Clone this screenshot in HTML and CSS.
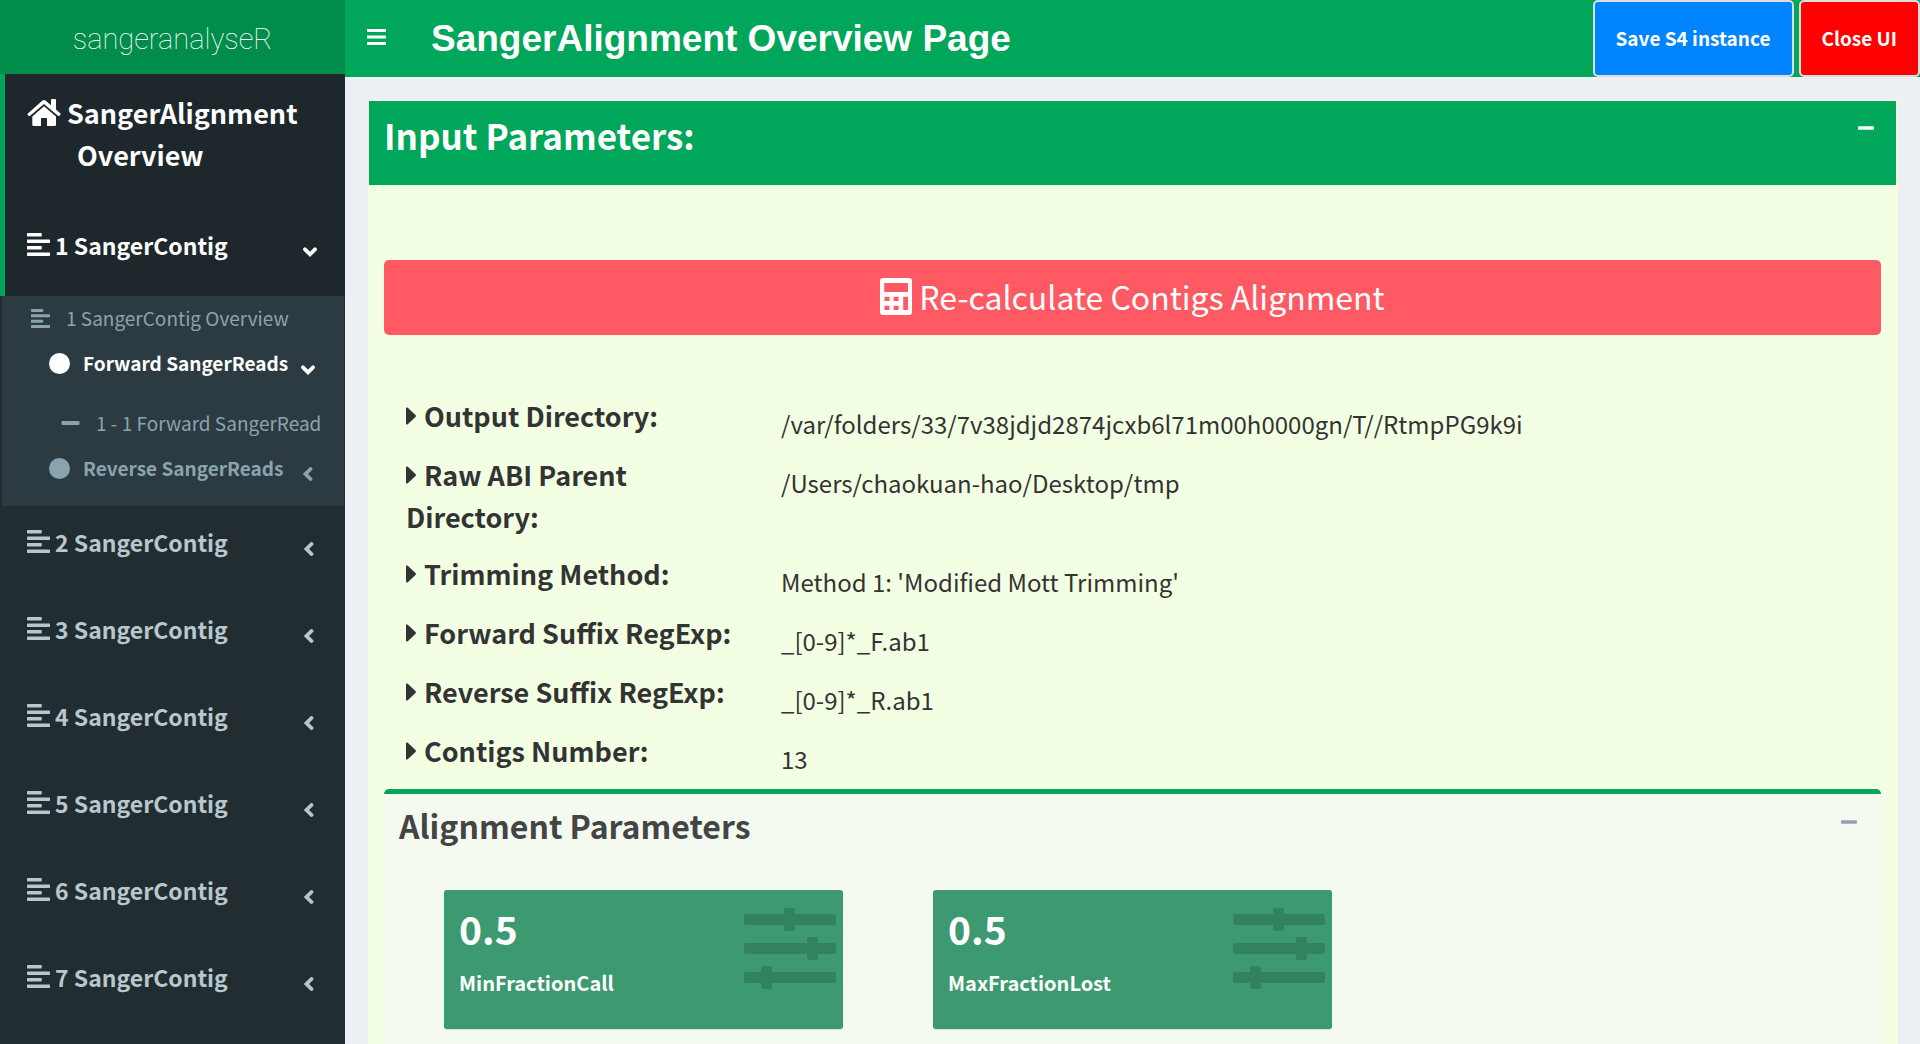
FILE: index.html
```html
<!DOCTYPE html>
<html lang="en">
<head>
<meta charset="utf-8">
<title>SangerAlignment Overview Page</title>
<link rel="stylesheet" href="styles.css">
</head>
<body>
<svg class="sprite" aria-hidden="true">
  <symbol id="align" viewBox="0 0 448 448"><path d="M12 0h264q12 0 12 13v42q0 13-12 13H12Q0 68 0 55V13Q0 0 12 0zM12 126h424q12 0 12 13v42q0 13-12 13H12q-12 0-12-13v-42q0-13 12-13zM12 254h264q12 0 12 13v42q0 13-12 13H12q-12 0-12-13v-42q0-13 12-13zM12 380h424q12 0 12 13v42q0 13-12 13H12q-12 0-12-13v-42q0-13 12-13z"/></symbol>
  <symbol id="chev-down" viewBox="0 0 14 10"><path d="M2 2.300l5 5 5-5" fill="none" stroke="currentColor" stroke-width="3.800" stroke-linecap="round"/></symbol>
  <symbol id="chev-left" viewBox="0 0 10 14"><path d="M7.500 2l-5 5 5 5" fill="none" stroke="currentColor" stroke-width="3.800" stroke-linecap="round"/></symbol>
  <symbol id="caret" viewBox="0 0 10 18"><path d="M0 1.500Q0 0 1.500 .6L9.500 8q.8 1 0 2L1.500 17.400Q0 18 0 16.500z"/></symbol>
  <symbol id="minus" viewBox="0 0 18 4"><rect width="18" height="4" rx="1"/></symbol>
  <symbol id="circle" viewBox="0 0 20 20"><circle cx="10" cy="10" r="10"/></symbol>
  <symbol id="sliders" viewBox="0 0 92 81"><path d="M2 6h38V2q0-2 2-2h7q2 0 2 2v4h39q2 0 2 2v7q0 2-2 2H51v4q0 2-2 2h-7q-2 0-2-2v-4H2q-2 0-2-2V8q0-2 2-2zM2 35h61v-4q0-2 2-2h7q2 0 2 2v4h16q2 0 2 2v7q0 2-2 2H74v4q0 2-2 2h-7q-2 0-2-2v-4H2q-2 0-2-2v-7q0-2 2-2zM2 64h15v-4q0-2 2-2h7q2 0 2 2v4h62q2 0 2 2v7q0 2-2 2H28v4q0 2-2 2h-7q-2 0-2-2v-4H2q-2 0-2-2v-7q0-2 2-2z"/></symbol>
</svg>
<div class="app">
  <aside class="sidebar">
    <a class="logo" href="#">sangeranalyseR</a>
    <nav>
      <a class="item home" href="#">
        <svg class="i-home" viewBox="0 0 34 27"><path d="M1.200 14.200L15.500 1.500q1.500-1.200 3 0L24 6.200V1.200Q24 0 25 0h3q1 0 1 1v9.500l4.200 3.700q.8.8.2 1.500l-1 1.100q-.7.6-1.500 0L17 5 3.100 16.800q-.8.6-1.500 0l-1-1.100q-.6-.7.6-1.500z"/><path d="M17 7.300l12 10.200v8.300q0 1.200-1.200 1.200H20v-8h-6v8H6.500q-1.200 0-1.200-1.200v-8.300z"/></svg>
        <span>SangerAlignment</span><span class="second">Overview</span></a>
      <a class="item active" href="#"><svg class="i-align"><use href="#align"/></svg><span>1 SangerContig</span><svg class="i-down"><use href="#chev-down"/></svg></a>
      <div class="submenu">
        <a class="sub" href="#"><svg class="i-small"><use href="#align"/></svg>1 SangerContig Overview</a>
        <a class="sub read open" href="#"><svg class="i-dot"><use href="#circle"/></svg>Forward SangerReads<svg class="i-down"><use href="#chev-down"/></svg></a>
        <a class="sub leaf" href="#"><svg class="i-minus"><use href="#minus"/></svg>1 - 1 Forward SangerRead</a>
        <a class="sub read" href="#"><svg class="i-dot"><use href="#circle"/></svg>Reverse SangerReads<svg class="i-left"><use href="#chev-left"/></svg></a>
      </div>
      <a class="item" href="#"><svg class="i-align"><use href="#align"/></svg><span>2 SangerContig</span><svg class="i-left"><use href="#chev-left"/></svg></a>
      <a class="item" href="#"><svg class="i-align"><use href="#align"/></svg><span>3 SangerContig</span><svg class="i-left"><use href="#chev-left"/></svg></a>
      <a class="item" href="#"><svg class="i-align"><use href="#align"/></svg><span>4 SangerContig</span><svg class="i-left"><use href="#chev-left"/></svg></a>
      <a class="item" href="#"><svg class="i-align"><use href="#align"/></svg><span>5 SangerContig</span><svg class="i-left"><use href="#chev-left"/></svg></a>
      <a class="item" href="#"><svg class="i-align"><use href="#align"/></svg><span>6 SangerContig</span><svg class="i-left"><use href="#chev-left"/></svg></a>
      <a class="item" href="#"><svg class="i-align"><use href="#align"/></svg><span>7 SangerContig</span><svg class="i-left"><use href="#chev-left"/></svg></a>
    </nav>
  </aside>
  <div class="page">
    <header class="topbar">
      <button class="toggle" aria-label="Toggle navigation"><svg viewBox="0 0 19 16"><path d="M0 0h19v3H0zM0 6.500h19v3H0zM0 13h19v3H0z"/></svg></button>
      <h1>SangerAlignment Overview Page</h1>
      <button class="action save">Save S4 instance</button>
      <button class="action close">Close UI</button>
    </header>
    <main>
      <section class="box">
        <div class="box-head"><h2>Input Parameters:</h2><button class="collapse" aria-label="Collapse"><svg><use href="#minus"/></svg></button></div>
        <div class="box-body">
          <button class="recalc"><svg viewBox="0 0 32 37"><path fill-rule="evenodd" d="M3 0h26q3 0 3 3v31q0 3-3 3H3q-3 0-3-3V3Q0 0 3 0zM5 5q-.8 0-.8.8v7.400q0 .8.8.8h22.200q.8 0 .8-.8V5.800q0-.8-.8-.8zM4.500 18.700V23h5v-4.300zM13.600 18.700V23h5v-4.300zM23.200 18.700V32H28V18.700zM4.500 27.800V32h5v-4.200zM13.600 27.800V32h5v-4.200z"/></svg>Re-calculate Contigs Alignment</button>
          <dl>
            <dt><svg><use href="#caret"/></svg>Output Directory:</dt><dd>/var/folders/33/7v38jdjd2874jcxb6l71m00h0000gn/T//RtmpPG9k9i</dd>
            <dt><svg><use href="#caret"/></svg>Raw ABI Parent Directory:</dt><dd>/Users/chaokuan-hao/Desktop/tmp</dd>
            <dt><svg><use href="#caret"/></svg>Trimming Method:</dt><dd>Method 1: 'Modified Mott Trimming'</dd>
            <dt><svg><use href="#caret"/></svg>Forward Suffix RegExp:</dt><dd>_[0-9]*_F.ab1</dd>
            <dt><svg><use href="#caret"/></svg>Reverse Suffix RegExp:</dt><dd>_[0-9]*_R.ab1</dd>
            <dt><svg><use href="#caret"/></svg>Contigs Number:</dt><dd>13</dd>
          </dl>
          <section class="panel">
            <div class="panel-head"><h3>Alignment Parameters</h3><button class="collapse" aria-label="Collapse"><svg><use href="#minus"/></svg></button></div>
            <div class="cards">
              <div class="card"><div><strong>0.5</strong><p>MinFractionCall</p></div><svg><use href="#sliders"/></svg></div>
              <div class="card"><div><strong>0.5</strong><p>MaxFractionLost</p></div><svg><use href="#sliders"/></svg></div>
            </div>
          </section>
        </div>
      </section>
    </main>
  </div>
</div>
</body>
</html>
```
FILE: styles.css
```css
* { box-sizing: border-box; }
body {
  margin: 0;
  background: #ecf0f5;
  color: #333;
  font-family: "Noto Sans CJK SC", "Noto Sans", sans-serif;
  overflow: hidden;
}
h1, h2, h3, p, dl, dd { margin: 0; }
a { color: inherit; text-decoration: none; }
button { font: inherit; color: inherit; border: 0; background: none; padding: 0; cursor: pointer; }
svg { fill: currentColor; flex: none; }
.sprite { display: none; }

.app { display: flex; height: 100vh; }
.page { flex: 1; min-width: 0; }

/* Sidebar */
.sidebar { width: 345px; flex: none; background: #222d32; color: #b8c7ce; overflow: hidden; }
.logo {
  display: block;
  height: 74px;
  background: #008d4c;
  color: #fff;
  font: 100 29px/78px Roboto, "Liberation Sans", sans-serif;
  text-align: center;
}
.item {
  display: flex;
  align-items: flex-start;
  height: 87px;
  padding: 19px 28px 0 22px;
  border-left: 5px solid transparent;
  font-weight: 700;
  font-size: 23px;
  line-height: 34px;
}
.item.home, .item.active { background: #1e282c; border-left-color: #00a65a; color: #fff; }
.item.home { flex-wrap: wrap; align-content: flex-start; height: 135px; font-size: 27px; line-height: 42px; gap: 0 6px; padding-top: 18px; padding-right: 0; }
.home .second { width: 100%; padding-left: 50px; }
.i-home { width: 34px; height: 27px; margin-top: 7px; }
.i-align { width: 23px; height: 23px; margin: 5px 5px 0 0; }
.i-down { width: 14px; height: 10px; margin: 19px 0 0 auto; }
.i-left { width: 10px; height: 14px; margin: 17px 3px 0 auto; }

.submenu { margin: 0 1px 0 2px; height: 210px; background: #2c3b41; color: #8aa4af; }
.sub { display: flex; align-items: flex-start; height: 45px; padding: 7px 29px 0 29px; font-size: 19px; line-height: 30px; }
.sub.read { padding-left: 47px; font-weight: 700; }
.sub.open { height: 60px; color: #fff; }
.sub.leaf { padding-left: 59px; padding-right: 0; }
.i-small { width: 19px; height: 19px; margin: 6px 16px 0 0; }
.i-dot { width: 21px; height: 21px; margin: 5px 13px 0 0; }
.i-minus { width: 19px; height: 4px; margin: 13px 16px 0 0; }
.sub .i-down { margin-top: 17px; }
.sub .i-left { margin-top: 14px; margin-right: 2px; }

/* Header */
.topbar { display: flex; align-items: center; height: 77px; padding-left: 22px; background: #00a65a; color: #fff; }
.toggle { padding-bottom: 4px; }
.toggle svg { display: block; width: 19px; height: 16px; }
.topbar h1 { flex: 1; padding-left: 45px; font: 700 37px/77px "Liberation Sans", Arial, sans-serif; }
.action { height: 77px; margin-left: 5px; padding: 0 21px 3px; border: 2px solid #ddd; border-radius: 5px; font-weight: 700; font-size: 19px; }
.save { background: #0084ff; }
.close { background: #f00; }

/* Main box */
main { padding: 23px 22px 0 23px; }
.box { padding: 1px 2px 0 1px; border-radius: 3px; background: #f3ffe3; box-shadow: 0 1px 1px rgba(0, 0, 0, .1); }
.box-head { display: flex; justify-content: space-between; height: 84px; padding: 9px 22px 0 15px; background: #00a65a; color: #fff; }
.box-head h2 { font-size: 35px; line-height: 50px; }
.collapse { align-self: flex-start; padding: 16px 0; }
.collapse svg { display: block; width: 16px; height: 4px; }
.box-body { padding: 75px 15px 0; }
.recalc {
  display: flex;
  align-items: center;
  justify-content: center;
  gap: 7px;
  width: 100%;
  height: 75px;
  padding-bottom: 3px;
  border-radius: 5px;
  background: #ff5964;
  color: #fff;
  font-size: 32px;
}
.recalc svg { width: 32px; height: 37px; }

dl { display: grid; grid-template-columns: 345px 1fr; row-gap: 15px; margin: 60px 22px 15px; }
dt { font-weight: 700; font-size: 27px; line-height: 42px; }
dt svg { width: 10px; height: 18px; margin-right: 8px; vertical-align: 2px; }
dd { padding: 14px 0 0 30px; font-size: 24px; line-height: 30px; }

.panel { min-height: 300px; border-top: 5px solid #00a65a; border-radius: 5px; background: #f4faf0; box-shadow: 0 1px 1px rgba(0, 0, 0, .1); }
.panel-head { display: flex; justify-content: space-between; height: 96px; padding: 10px 24px 0 15px; color: #444; }
.panel-head h3 { font-size: 32px; line-height: 42px; }
.panel .collapse { color: #97a0b3; }
.cards { display: grid; grid-template-columns: 399px 399px; gap: 90px; padding-left: 60px; }
.card { display: flex; justify-content: space-between; height: 139px; padding: 16px 7px 0 15px; border-radius: 3px; background: #3d9970; color: #fff; box-shadow: 0 1px 1px rgba(0, 0, 0, .1); }
.card strong { display: block; font-size: 39px; line-height: 44px; }
.card p { padding-top: 18px; font-weight: 700; font-size: 20px; line-height: 30px; }
.card svg { width: 92px; height: 81px; margin-top: 2px; color: rgba(0, 0, 0, .15); }
```
